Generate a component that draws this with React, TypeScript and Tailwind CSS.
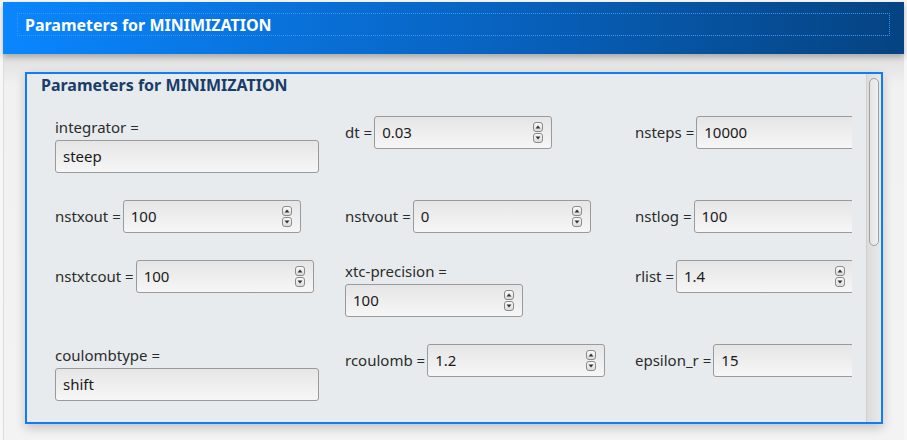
import React from "react";

type Field = {
  label: string;
  value: string;
  kind: "spin" | "text";
  stacked?: boolean;
};

const fields: Field[] = [
  { label: "integrator =", value: "steep", kind: "text", stacked: true },
  { label: "dt =", value: "0.03", kind: "spin" },
  { label: "nsteps =", value: "10000", kind: "spin" },
  { label: "nstxout =", value: "100", kind: "spin" },
  { label: "nstvout =", value: "0", kind: "spin" },
  { label: "nstlog =", value: "100", kind: "spin" },
  { label: "nstxtcout =", value: "100", kind: "spin" },
  { label: "xtc-precision =", value: "100", kind: "spin", stacked: true },
  { label: "rlist =", value: "1.4", kind: "spin" },
  { label: "coulombtype =", value: "shift", kind: "text", stacked: true },
  { label: "rcoulomb =", value: "1.2", kind: "spin" },
  { label: "epsilon_r =", value: "15", kind: "spin" },
];

function SpinButton({ up }: { up?: boolean }) {
  return (
    <div className="w-[10px] h-[10px] rounded-[3px] border border-[#8a8a8a] bg-gradient-to-b from-[#fafafa] to-[#dcdcdc] flex items-center justify-center">
      <svg width="6" height="4" viewBox="0 0 6 4">
        {up ? <path d="M3 0.5 L5.5 3.5 L0.5 3.5 Z" fill="#333" /> : <path d="M0.5 0.5 L5.5 0.5 L3 3.5 Z" fill="#333" />}
      </svg>
    </div>
  );
}

function Input({ value, kind }: { value: string; kind: "spin" | "text" }) {
  return (
    <div
      className={`h-[33px] shrink-0 rounded-[3px] border border-[#9a9a9a] bg-gradient-to-b from-[#e6e6e6] to-[#f6f6f6] flex items-center pl-[7px] pr-[7px] ${
        kind === "spin" ? "w-[178px]" : "w-[264px]"
      }`}
    >
      <span className="flex-1 text-[15px] text-[#1a1a1a]">{value}</span>
      {kind === "spin" && (
        <div className="flex flex-col gap-[1px] mr-[1px]">
          <SpinButton up />
          <SpinButton />
        </div>
      )}
    </div>
  );
}

function FieldCell({ f }: { f: Field }) {
  if (f.stacked) {
    return (
      <div className="flex flex-col">
        <div className="h-[24px] leading-[22px] text-[15px] text-[#2b2b2b]">{f.label}</div>
        <Input value={f.value} kind={f.kind} />
      </div>
    );
  }
  return (
    <div className="flex items-center">
      <span className="text-[15px] text-[#2b2b2b] mr-[2px] whitespace-nowrap">{f.label}</span>
      <Input value={f.value} kind={f.kind} />
    </div>
  );
}

export default function App() {
  return (
    <div className="w-[907px] h-[440px] bg-[#f7f7f7] overflow-hidden font-['Noto_Sans',sans-serif] pt-[2px]">
      <div className="mx-[3px] h-[52px] bg-gradient-to-r from-[#0a86fe] via-[#0866c6] to-[#054382] px-[14px] pt-[11px] relative z-10 shadow-[0_3px_6px_rgba(0,0,0,0.25)]">
        <div className="h-[23px] border border-dotted border-[#3d95f0] flex items-center pl-[7px]">
          <h1 className="text-[16px] font-bold text-white">Parameters for MINIMIZATION</h1>
        </div>
      </div>

      <div className="mx-[3px] h-[386px] border-l border-[#dcdcdc] bg-gradient-to-b from-[#dedede] via-[#f1f1f1] via-[8%] to-[#f3f3f3] pt-[18px] pl-[21px]">
        <div className="w-[858px] h-[352px] border-2 border-[#0d7ef7] bg-[#e8ebee] flex shadow-[0_4px_10px_rgba(0,0,0,0.2)]">
          <div className="w-[825px] overflow-hidden">
            <h2 className="pl-[14px] pt-[1px] h-[42px] text-[16px] font-bold text-[#173d6b] leading-[20px]">
              Parameters for MINIMIZATION
            </h2>
            <div className="pl-[28px] grid grid-cols-[290px_290px_290px] gap-y-[27px] items-start">
              {fields.map((f) => (
                <FieldCell key={f.label} f={f} />
              ))}
            </div>
          </div>
          <div className="ml-auto w-[15px] h-full bg-gradient-to-r from-[#dcdcdc] to-[#e9e9e9] border-l border-[#d0d0d0] pt-[4px] flex justify-center">
            <div className="w-[10px] h-[168px] rounded-full border border-[#a0a0a0] bg-gradient-to-r from-[#e4e4e4] to-[#f0f0f0]" />
          </div>
        </div>
      </div>
    </div>
  );
}
